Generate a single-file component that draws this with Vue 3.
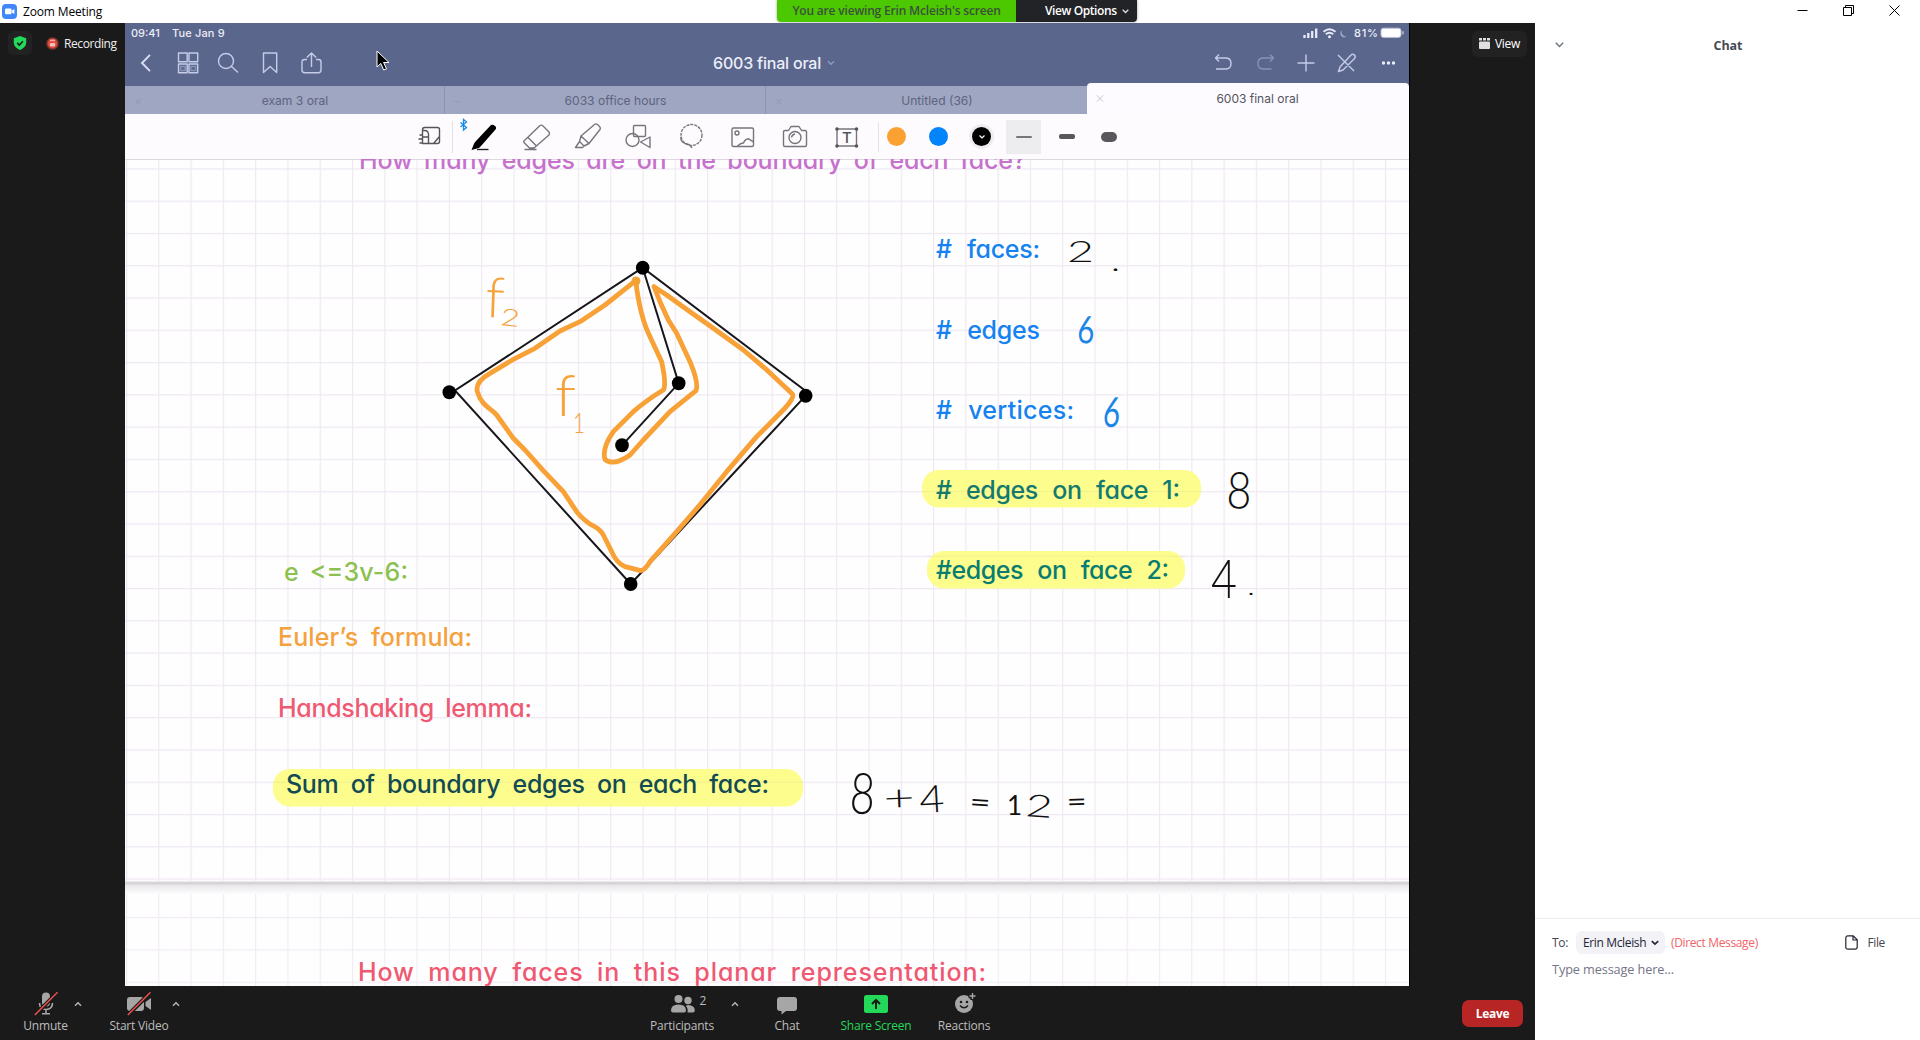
<script setup>
const notes = [
  { t: 'How many edges are on the boundary of each face?', x: 359, y: 168.5, w: 667, c: '#c672cd', s: 5 },
  { t: '# faces:', x: 936, y: 258, w: 104, c: '#1482f0', s: 9 },
  { t: '# edges', x: 936, y: 339, w: 104, c: '#1482f0', s: 9 },
  { t: '# vertices:', x: 936, y: 418.5, w: 138, c: '#1482f0', s: 9 },
  { t: '# edges on face 1:', x: 936, y: 499, w: 244, c: '#14796f', s: 8 },
  { t: '#edges on face 2:', x: 936, y: 579, w: 233, c: '#087c70', s: 8 },
  { t: 'e <=3v-6:', x: 284, y: 580.5, w: 124, c: '#8cc152', s: 4 },
  { t: 'Euler’s formula:', x: 278, y: 646, w: 194, c: '#f4a23e', s: 6 },
  { t: 'Handshaking lemma:', x: 278, y: 717, w: 254, c: '#ef5a73', s: 5 },
  { t: 'Sum of boundary edges on each face:', x: 286, y: 793, w: 483, c: '#134b52', s: 6 },
  { t: 'How many faces in this planar representation:', x: 358, y: 980.5, w: 628, c: '#f05872', s: 6 },
]

const highlights = [
  { x: 922, y: 470, w: 279 },
  { x: 927, y: 551, w: 258 },
  { x: 273, y: 769, w: 530 },
]

const black = '#111'
const blue = '#1c86e8'
const orange = '#f7a23b'
const ink = [
  { t: '2', x: 1067, y: 262, s: 30, w: 27, c: black, r: 0, k: 300 },
  { t: '.', x: 1112, y: 271, s: 22, w: 7, c: black, r: 0, k: 400 },
  { t: '6', x: 1077, y: 343, s: 38, w: 17, c: blue, r: 2, k: 400 },
  { t: '6', x: 1102, y: 426, s: 42, w: 17, c: blue, r: 6, k: 400 },
  { t: '8', x: 1226, y: 508, s: 51, w: 25, c: black, r: 2, k: 300 },
  { t: '4', x: 1211, y: 598, s: 54, w: 26, c: black, r: 0, k: 300 },
  { t: '.', x: 1248, y: 595, s: 18, w: 6, c: black, r: 0, k: 400 },
  { t: '8', x: 849, y: 813, s: 57, w: 25, c: black, r: 3, k: 300 },
  { t: '+', x: 884, y: 811, s: 36, w: 31, c: black, r: -2, k: 300 },
  { t: '4', x: 920, y: 813, s: 38, w: 25, c: black, r: -3, k: 300 },
  { t: '=', x: 969, y: 811, s: 27, w: 21, c: black, r: 4, k: 400 },
  { t: '1', x: 1007, y: 815, s: 27, w: 15, c: black, r: 0, k: 400 },
  { t: '2', x: 1025, y: 816, s: 31, w: 27, c: black, r: 4, k: 300 },
  { t: '=', x: 1067, y: 811, s: 26, w: 20, c: black, r: -2, k: 400 },
  { t: 'f', x: 485, y: 317, s: 56, w: 19, c: orange, r: 2, k: 300 },
  { t: '2', x: 500, y: 325, s: 24, w: 19, c: orange, r: 6, k: 300 },
  { t: 'f', x: 555, y: 416, s: 58, w: 21, c: orange, r: 0, k: 300 },
  { t: '1', x: 573, y: 433, s: 27, w: 12, c: orange, r: 0, k: 300 },
]

const vertices = [
  [642.7, 267.7], [449.3, 392.3], [678.7, 383.3], [622, 445.3], [805.7, 395.7], [630.7, 584],
]
</script>

<template>
  <div class="window">
    <header class="titlebar">
      <svg class="app" width="15" height="15" viewBox="0 0 15 15">
        <rect width="15" height="15" rx="4" fill="#4087fc" />
        <rect x="3" y="4.6" width="6.6" height="5.6" rx="1.3" fill="#fff" />
        <path d="M10 6.4l2.4-1.5v5L10 8.4z" fill="#fff" />
      </svg>
      <span class="app-name">Zoom Meeting</span>
      <div class="banner">
        <span class="viewing">You are viewing Erin Mcleish's screen</span>
        <span class="options">View Options
          <svg width="7" height="5" viewBox="0 0 7 5"><path d="M.7.8l2.8 2.7L6.3.8" fill="none" stroke="#ddd" stroke-width="1.3" /></svg>
        </span>
      </div>
      <div class="winbtns">
        <svg width="11" height="11" viewBox="0 0 11 11"><path d="M.5 5.5h10" stroke="#000" /></svg>
        <svg width="11" height="11" viewBox="0 0 11 11"><path d="M2.5 2.5v-2h8v8h-2M.5 2.5h8v8h-8z" fill="none" stroke="#000" /></svg>
        <svg width="11" height="11" viewBox="0 0 11 11"><path d="M.5.5l10 10m0-10l-10 10" stroke="#000" /></svg>
      </div>
    </header>

    <div class="body">
      <section class="meeting">
        <div class="stage">
          <aside class="left">
            <span class="shield">
              <svg width="14" height="14" viewBox="0 0 14 14"><path d="M7 0l6.2 2.2v4.6C13.2 10.2 10 12.8 7 14 4 12.8.8 10.2.8 6.8V2.2z" fill="#23d959" /><path d="M4.2 6.9l2.1 2.1 3.6-3.7" fill="none" stroke="#1a1a1a" stroke-width="1.6" /></svg>
            </span>
            <svg class="rec" width="13" height="13" viewBox="0 0 13 13"><circle cx="6.5" cy="6.5" r="6.3" fill="#7e3530" /><circle cx="6.5" cy="6.5" r="4.8" fill="#e0493c" /><rect x="4" y="2.6" width="5" height="1.6" fill="#efaaa2" /><rect x="3.8" y="6" width="5.4" height="3.6" rx="1" fill="#f3c0b9" /></svg>
            <span class="rec-label">Recording</span>
          </aside>

          <div class="share">
            <div class="nav">
              <div class="status">
                <span class="time">09:41</span>
                <span class="date">Tue Jan 9</span>
                <svg class="signal" width="101" height="12" viewBox="0 0 101 12">
                  <path d="M1.5 11V8M5.3 11V6M9.2 11V4M13.2 11V1.5" stroke="#e8ebfb" stroke-width="2.3" />
                  <path d="M20.5 4.8q6-5 12 0M22.8 7.2q3.7-3 7.4 0" fill="none" stroke="#e8ebfb" stroke-width="1.8" /><circle cx="26.5" cy="9.7" r="1.5" fill="#e8ebfb" />
                  <path d="M38.5 3q-.4 6 5 6.8-4 2-6-1.8-1-2.8 1-5" fill="#9fa8cb" />
                  <text x="51" y="10" class="pct" textLength="24">81%</text>
                  <rect x="78" y="1.2" width="20" height="9.2" rx="2.4" fill="#fff" stroke="#b8bfd9" /><path d="M100 4.3v3" stroke="#b8bfd9" stroke-width="1.5" />
                </svg>
              </div>
              <div class="actions">
                <svg width="44" height="26" viewBox="0 0 44 26"><path d="M25 4.8L17 13l8 8.2" fill="none" stroke="#d9def5" stroke-width="1.9" /></svg>
                <svg width="38" height="26" viewBox="0 0 38 26" class="line"><path d="M9.5 3h8.7v8.7H9.5zM20 3h8.7v8.7H20zM9.5 14h8.7v8.7H9.5zM20 14h8.7v8.7H20z" /><path d="M11.5 16.5h4.7v4h-4.7zM22 16.5h4.7v4H22z" stroke="#8792b7" /></svg>
                <svg width="42" height="26" viewBox="0 0 42 26" class="line"><circle cx="19" cy="11" r="7.5" /><path d="M24.5 16.5l6.5 6" /></svg>
                <svg width="42" height="26" viewBox="0 0 42 26" class="line"><path d="M14.5 3h13.2v19.5l-6.6-6-6.6 6z" /></svg>
                <svg width="40" height="26" viewBox="0 0 40 26" class="line"><path d="M16 9.5h-2.5q-2.5 0-2.5 2.5v8q0 2.7 2.7 2.7h13.6q2.7 0 2.7-2.7v-8q0-2.5-2.5-2.5H25M20.5 17V3m-4.7 4.5L20.5 3l4.7 4.5" /></svg>
                <span class="gap"></span>
                <span class="doc-title">6003 final oral</span>
                <svg class="tchev" width="8" height="6" viewBox="0 0 8 6"><path d="M1 1.3l3 3 3-3" fill="none" stroke="#909abf" stroke-width="1.4" /></svg>
                <span class="gap"></span>
                <svg width="42" height="26" viewBox="0 0 42 26" class="line"><path d="M17 4.5L13.5 8l3.5 3.6M14 8h10.5q4.5.5 4.5 5.4T24.5 19H14" /></svg>
                <svg width="42" height="26" viewBox="0 0 42 26" class="line dim"><path d="M26 4.5L29.5 8 26 11.6M29 8H18.5q-4.5.5-4.5 5.4t4.5 5.6h9" /></svg>
                <svg width="40" height="26" viewBox="0 0 40 26" class="line"><path d="M11.5 13h17M20 4.500v17" /></svg>
                <svg width="41" height="26" viewBox="0 0 41 26" class="line"><path d="M12 5l16 16M12.5 21.5l1.5-4.5L25 5q2-1.5 3.5 0t0 3.5L17 20z" /></svg>
                <svg width="42" height="26" viewBox="0 0 42 26" fill="#e8ebfb"><circle cx="16.5" cy="13" r="1.7" /><circle cx="21.5" cy="13" r="1.7" /><circle cx="26.5" cy="13" r="1.7" /></svg>
              </div>
              <svg class="cursor" width="14" height="22" viewBox="0 0 14 22"><path d="M1 1v16l3.8-3.6 2.9 6.6 2.8-1.2-2.9-6.3H13z" fill="#000" stroke="#fff" /></svg>
            </div>

            <div class="tabs">
              <div class="tab"><i>×</i><span>exam 3 oral</span></div>
              <div class="tab"><i>–</i><span>6033 office hours</span></div>
              <div class="tab"><i>×</i><span>Untitled (36)</span></div>
              <div class="tab active"><svg width="8" height="9" viewBox="0 0 10 10"><path d="M1 1l8 8m0-8L1 9" stroke="#c5c3cc" stroke-width="1.2" /></svg><span>6003 final oral</span></div>
            </div>

            <div class="tools">
              <svg width="44" height="40" viewBox="408 118 44 40" class="tool"><path d="M422.5 131q0-2.500 2-2.500h13q2 0 2 2v12q0 2-2 2H422.500M422.500 131.500h2q4 0 4 4v9h-6zM422.500 138h6M419.500 136h3M418.500 140h4M419.500 144h3M433.500 144.500l6-7" stroke="#555" /></svg>
              <svg width="64" height="40" viewBox="452 118 64 40"><path d="M452.5 122v32" stroke="#e4e0e8" /><path d="M460.500 123.500l6 5-3 2.500v-10.500l3 2.500-6 5" fill="none" stroke="#168be5" stroke-width="1.3" /><path d="M491 126q2-1 4 1 2 1.500.5 3.500L481 147q-1.500 2-4 2.500l-5.500 1.500 2-5q.5-2 2-3.500z" fill="#000" /><path d="M477 150.500h11.500" stroke="#222" stroke-width="1.4" /></svg>
              <svg width="44" height="40" viewBox="515 118 44 40" class="tool"><path d="M525 141l15-14.500q1.500-1 3 .5l6 6q1 1.500 0 3L534 149h-4.500l-5.500-5.500q-1-1 1-2.500zM528 138.500l8.500 8.500M524.500 150.500h12" /></svg>
              <svg width="54" height="40" viewBox="561 118 54 40" class="tool"><path d="M581 137l13.500-11.500q1.500-1.200 3 0l2 2q1.500 1.500.5 3L589 144.500zM581 137l-1.500 5.500 4.500 4.500 5-2.500M579.500 142.500l-4 6h7l1.500-1.500" /></svg>
              <svg width="48" height="40" viewBox="614 118 48 40" class="tool"><rect x="633.5" y="126.500" width="12" height="11" rx="1" /><circle cx="632.5" cy="141" r="6.5" /><path d="M640.5 143l9.5-5v10.500z" /></svg>
              <svg width="58" height="40" viewBox="662 118 58 40" class="tool"><circle cx="691.5" cy="136" r="10.5" stroke-dasharray="3 1" /><path d="M681 138q-1 5 4.500 6.500 5 1 6.500 4.500" /></svg>
              <svg width="46" height="40" viewBox="720 118 46 40" class="tool"><rect x="732" y="129" width="21.5" height="18.500" rx="1.500" /><circle cx="737" cy="134" r="2" /><path d="M737.5 147q3-3 6-3 1.500-4 5-4.200l5 3" /></svg>
              <svg width="58" height="40" viewBox="766 118 58 40" class="tool"><path d="M785 131.500h3.500l2.500-4h8l2.500 4h3.500q1.500 0 1.500 1.500v13q0 1.500-1.500 1.500h-20q-1.500 0-1.500-1.500v-13q0-1.500 1.500-1.500z" /><circle cx="795" cy="138.500" r="6" /><path d="M791.5 138.500q.5-3 3.500-3.500" /></svg>
              <svg width="54" height="40" viewBox="824 118 54 40" class="tool"><rect x="837" y="130" width="19.5" height="17" /><g fill="#555" stroke="none"><circle cx="837" cy="130" r="1.800" /><circle cx="856.5" cy="130" r="1.800" /><circle cx="837" cy="147" r="1.800" /><circle cx="856.5" cy="147" r="1.800" /></g><text x="842" y="144" class="tee">T</text></svg>
              <span class="divider"></span>
              <span class="dot o"></span>
              <span class="dot b"></span>
              <span class="dot k"><svg width="8" height="6" viewBox="0 0 8 6"><path d="M1.5 1.500L4 4l2.500-2.500" fill="none" stroke="#fff" stroke-width="1.2" /></svg></span>
              <span class="pen sel"><b></b></span>
              <span class="pen mid"><b></b></span>
              <span class="pen big"><b></b></span>
            </div>

            <svg class="page" width="1284" height="827" viewBox="125 159 1284 827">
              <defs>
                <pattern id="grid" x="126" y="168.3" width="32.28" height="32.28" patternUnits="userSpaceOnUse"><path d="M0 .5h32.28M.5 0v32.28" stroke="#efe8f2" stroke-width="1.3" fill="none" /></pattern>
                <pattern id="grid2" x="126" y="917" width="32.28" height="32.28" patternUnits="userSpaceOnUse"><path d="M0 .5h32.28M.5 0v32.28" stroke="#f1ebf4" stroke-width="1.3" fill="none" /></pattern>
                <linearGradient id="edge" x1="0" y1="0" x2="0" y2="1"><stop offset="0" stop-color="#f4f1f5" /><stop offset=".16" stop-color="#cfcbd0" /><stop offset=".32" stop-color="#e9e6ea" /><stop offset="1" stop-color="#fdfcfd" /></linearGradient>
              </defs>
              <rect x="125" y="159" width="1284" height="827" fill="#fefefe" />
              <rect x="125" y="159" width="1284" height="723" fill="url(#grid)" />
              <rect x="125" y="894" width="1284" height="92" fill="url(#grid2)" />
              <rect x="125" y="881" width="1284" height="13" fill="url(#edge)" />
              <path d="M125 159.500h1284" stroke="#dcd9df" />
              <rect v-for="h in highlights" :key="h.y" :x="h.x" :y="h.y" :width="h.w" height="37.500" rx="17" fill="#fdfd8e" />
              <g opacity=".08" stroke="#805090"><path d="M922 491.600h279M927 556.200h258M273 782.200h530" /></g>
              <text v-for="n in notes" :key="n.t" class="note" :x="n.x" :y="n.y" :fill="n.c" :word-spacing="n.s" :textLength="n.w" lengthAdjust="spacing">{{ n.t }}</text>

              <path d="M642.7 267.700L455 390.500L630.700 584L805.700 395.700V391L642.700 267.700L678.700 383.300L622 445.300" fill="none" stroke="#16161c" stroke-width="2" />
              <path transform="translate(400 230) scale(.33333)" d="M707 152L615 225L540 275L480 303L405 355L340 388L270 430Q225 455 232 485C245 530 275 535 290 555L340 625L375 660L430 722L490 785L530 845C575 900 590 880 610 915L635 965Q650 1000 675 1010L722 1022Q735 1020 750 995L830 905L895 830L980 725L1070 620L1140 550Q1190 500 1175 490L1095 415L1030 360L940 295L870 245L800 195L762 170L780 215L805 270L830 310L870 395Q897 460 888 482L810 545L730 630L690 675Q640 710 615 688Q605 655 640 605L700 545Q740 510 790 480Q800 465 785 395L750 320Q720 260 707 152" fill="none" stroke="#f7a137" stroke-width="14.500" stroke-linejoin="round" stroke-linecap="round" />
              <circle cx="636" cy="281" r="4.500" fill="#f0a334" />
              <ellipse v-for="v in vertices" :key="v[0]" :cx="v[0]" :cy="v[1]" rx="6.800" ry="7" fill="#000" />
              <text v-for="(g, i) in ink" :key="i" class="ink" :x="g.x" :y="g.y" :fill="g.c" :font-size="g.s" :font-weight="g.k" :textLength="g.w" lengthAdjust="spacingAndGlyphs" :transform="`rotate(${g.r} ${g.x} ${g.y})`">{{ g.t }}</text>
            </svg>
          </div>

          <aside class="right">
            <span class="view">
              <svg width="11" height="11" viewBox="0 0 11 11" fill="#e0e0e0"><rect width="3" height="2.500" /><rect x="4" width="3" height="2.500" /><rect x="8" width="3" height="2.500" /><rect y="3.500" width="11" height="7.500" rx="1" /></svg>
              View
            </span>
          </aside>
        </div>

        <footer class="bar">
          <div class="item mute">
            <svg width="24" height="24" viewBox="0 0 24 24"><rect x="8" y=".5" width="8" height="14" rx="4" fill="#a6a6a6" /><path d="M5.5 11q0 6.500 6.500 6.500t6.500-6.500M12 17.500v4M8 21.800h8" fill="none" stroke="#a6a6a6" stroke-width="1.6" /><path d="M1 23L23.500.5" stroke="#1a1a1a" stroke-width="4" /><path d="M.8 23L23.500.3" stroke="#f0524f" stroke-width="1.5" /></svg>
            <span>Unmute</span>
          </div>
          <svg class="chev c1" width="8" height="6" viewBox="0 0 8 6"><path d="M1 4.700l3-3 3 3" /></svg>
          <div class="item video">
            <svg width="25" height="24" viewBox="0 0 25 24"><rect x="0" y="5" width="17" height="14" rx="3" fill="#a6a6a6" /><path d="M18.5 10L24 6v12l-5.500-4z" fill="#a6a6a6" /><path d="M1 23L23.500.5" stroke="#1a1a1a" stroke-width="4" /><path d="M.8 23L23.500.3" stroke="#f0524f" stroke-width="1.5" /></svg>
            <span>Start Video</span>
          </div>
          <svg class="chev c2" width="8" height="6" viewBox="0 0 8 6"><path d="M1 4.700l3-3 3 3" /></svg>
          <div class="item people">
            <svg width="38" height="24" viewBox="0 0 38 24" fill="#a6a6a6"><circle cx="8.5" cy="7" r="4" /><circle cx="18" cy="8.500" r="3.700" /><path d="M1 18.500q0-6 7.500-6t7.500 6q0 2-2 2H3q-2 0-2-2zM17.500 20.500q.8-4-1.700-6.700 2.500-1.200 5-.3 4 1 4 5 0 2-2 2z" /><text x="29.5" y="13" class="cnt">2</text></svg>
            <span>Participants</span>
          </div>
          <svg class="chev c3" width="8" height="6" viewBox="0 0 8 6"><path d="M1 4.700l3-3 3 3" /></svg>
          <div class="item chat-b">
            <svg width="22" height="24" viewBox="0 0 22 24"><path d="M4 5h14q3 0 3 3v8q0 3-3 3h-8l-4.500 3.500V19H4q-3 0-3-3V8q0-3 3-3z" fill="#a6a6a6" /></svg>
            <span>Chat</span>
          </div>
          <div class="item green">
            <svg width="24" height="24" viewBox="0 0 24 24"><rect y="3" width="24" height="18" rx="2.500" fill="#23d959" /><path d="M12 17V8.500M8 12l4-4 4 4" fill="none" stroke="#1a1a1a" stroke-width="2" /></svg>
            <span>Share Screen</span>
          </div>
          <div class="item react">
            <svg width="24" height="24" viewBox="0 0 24 24"><circle cx="12" cy="12" r="9" fill="#a6a6a6" /><path d="M20.500 0v8M16.500 4h8" stroke="#1a1a1a" stroke-width="4.500" /><circle cx="9" cy="10" r="1.300" fill="#1a1a1a" /><circle cx="15" cy="10" r="1.300" fill="#1a1a1a" /><path d="M8 13.500q4 4.500 8 0" fill="none" stroke="#1a1a1a" stroke-width="1.500" /><path d="M20.500 1v6M17.500 4h6" stroke="#a6a6a6" stroke-width="1.400" /></svg>
            <span>Reactions</span>
          </div>
          <button class="leave">Leave</button>
        </footer>
      </section>

      <section class="chat">
        <div class="chat-head">
          <svg width="9" height="6" viewBox="0 0 9 6"><path d="M.8.8l3.700 3.700L8.200.8" fill="none" stroke="#6e7680" stroke-width="1.500" /></svg>
          <h2>Chat</h2>
        </div>
        <div class="compose">
          <div class="to">
            <span class="lbl">To:</span>
            <span class="pill">Erin Mcleish <svg width="8" height="6" viewBox="0 0 8 6"><path d="M.8 1.200l3.200 3 3.200-3" fill="none" stroke="#232333" stroke-width="1.600" /></svg></span>
            <span class="dm">(Direct Message)</span>
            <svg class="file" width="13" height="15" viewBox="0 0 13 15"><path d="M3 .8h5.200l4 4V12q0 2.200-2.200 2.200H3Q.8 14.200.8 12V3Q.8.8 3 .8zM8 .8v4.200h4.200" fill="none" stroke="#232333" stroke-width="1.200" /></svg>
            <span class="lbl">File</span>
          </div>
          <div class="ph">Type message here...</div>
        </div>
      </section>
    </div>
  </div>
</template>

<style>
body { margin: 0; overflow: hidden; }
</style>

<style scoped>
.window { width: 1920px; height: 1040px; display: flex; flex-direction: column; background: #fff; font-family: "Open Sans", "Noto Sans", sans-serif; font-size: 12px; color: #000; overflow: hidden; }
svg { display: block; flex: none; }
.titlebar { position: relative; height: 23px; flex: none; display: flex; align-items: center; padding-left: 2px; box-sizing: border-box; }
.app { margin-bottom: 1px; }
.app-name { margin-left: 6px; flex: 1; letter-spacing: -.15px; }
.banner { position: absolute; left: 777px; top: 0; width: 360px; height: 22px; display: flex; border-radius: 0 0 4px 4px; overflow: hidden; font-size: 12px; font-weight: 600; line-height: 22px; box-shadow: 0 0 3px #999; }
.viewing { width: 239px; background: #4bc800; color: #3b513b; text-align: center; letter-spacing: -.18px; white-space: nowrap; }
.options { flex: 1; background: #222326; color: #fff; display: flex; align-items: center; gap: 5px; padding-left: 29px; letter-spacing: -.4px; white-space: nowrap; }
.winbtns { display: flex; gap: 35px; padding-right: 20px; margin-bottom: 3px; }
.body { flex: 1; display: flex; min-height: 0; }
.meeting { width: 1535px; background: #1a1a1a; display: flex; flex-direction: column; }
.stage { height: 963px; display: flex; }
.left { width: 125px; display: flex; align-items: center; height: 40px; color: #f0f0f0; }
.shield { width: 24px; height: 24px; margin-left: 8px; border-radius: 5px; background: #222; display: flex; align-items: center; justify-content: center; }
.rec { margin-left: 14px; }
.rec-label { margin-left: 5px; letter-spacing: -.4px; }
.right { width: 125px; display: flex; }
.view { margin: 8px 0 0 62px; width: 55px; height: 26px; border-radius: 6px; background: #222; display: flex; align-items: center; gap: 5px; padding: 0 0 2px 7px; box-sizing: border-box; color: #fff; letter-spacing: -.3px; }
.share { width: 1285px; height: 963px; display: flex; flex-direction: column; font-family: Inter, sans-serif; overflow: hidden; border-right: 1px solid #000; box-sizing: border-box; }
.nav { position: relative; height: 63px; background: #5a668b; color: #eceefb; }
.status { height: 19px; display: flex; align-items: center; padding: 0 5px 0 6px; font-size: 11px; font-weight: 500; }
.time { width: 41px; }
.date { flex: 1; letter-spacing: .15px; }
.pct { font: 500 11px Inter, sans-serif; fill: #eceefb; }
.actions { height: 41px; display: flex; align-items: center; }
.line { fill: none; stroke: #c5ccea; stroke-width: 1.4; stroke-linejoin: round; }
.dim { stroke: #8993b8; }
.gap { flex: 1; }
.gap:first-of-type { flex: 0 0 382px; }
.doc-title { font-size: 16px; font-weight: 500; width: 109px; white-space: nowrap; letter-spacing: -.2px; }
.tchev { margin-left: 5px; }
.cursor { position: absolute; left: 251px; top: 27px; }
.tabs { height: 28px; display: flex; align-items: flex-end; background: #5a668b; flex: none; }
.tab { flex: 0 0 320px; height: 28px; background: #9fa6c1; display: flex; align-items: center; box-sizing: border-box; border-right: 1px solid #8c94b3; color: #5d6480; font-size: 12.1px; }
.tab:nth-child(2) { flex-basis: 321px; }
.tab:nth-child(3) { flex-basis: 321px; border-right: 0; }
.tab i { width: 10px; margin-left: 9px; font-style: normal; color: #929bb9; }
.tab span { flex: 1; text-align: center; padding-left: 2px; }
.tab.active { flex: 1; height: 31px; margin-top: -3px; background: #fdfbff; border: 0; border-radius: 4px 4px 0 0; color: #55545e; font-size: 12px; z-index: 1; }
.tab.active svg { margin-left: 9px; }
.tools { height: 45px; flex: none; display: flex; align-items: center; padding-left: 283px; background: #fdfbfe; }
.tool { fill: none; stroke: #77757b; stroke-width: 1.4; stroke-linejoin: round; }
.tools > svg:nth-child(2) { margin-right: -1px; }
.tools > svg:nth-child(3) { margin-right: 2px; }
.tools > svg:nth-child(4) { margin-right: -1px; }
.tee { font: 500 15px Inter, sans-serif; fill: #555; stroke: none; }
.divider { width: 1px; height: 30px; background: #e6e3e8; }
.dot { width: 19px; height: 19px; border-radius: 50%; display: flex; align-items: center; justify-content: center; flex: none; }
.o { background: #fba132; margin-left: 8px; }
.b { background: #0484fb; margin-left: 23px; }
.k { background: #000; margin-left: 24px; box-shadow: 0 0 0 3px #ededf0; }
.pen { width: 35px; height: 34px; display: flex; align-items: center; justify-content: center; flex: none; }
.pen b { width: 16px; height: 2px; border-radius: 5px; background: #59565c; }
.sel { background: #ededef; margin-left: 15px; }
.sel b { background: #777; }
.mid { margin-left: 8px; }
.mid b { height: 5px; border-radius: 2px; }
.big { margin-left: 7px; }
.big b { height: 10px; }
.note { font: 500 25px Inter, sans-serif; font-feature-settings: "cv11"; white-space: pre; }
.ink { font-family: Lato, sans-serif; }
.bar { flex: 1; display: flex; align-items: flex-start; padding-top: 6px; color: #bdbdbd; }
.item { display: flex; flex-direction: column; align-items: center; white-space: nowrap; letter-spacing: -.2px; flex: none; }
.item span { line-height: 16px; margin-top: 2px; }
.mute { width: 91px; }
.chev { margin-top: 9px; fill: none; stroke: #b4b4b4; stroke-width: 1.5; }
.c1 { margin-left: -17px; }
.video { width: 80px; margin-left: 17px; }
.c2 { margin-left: -7px; }
.people { width: 80px; margin-left: 462px; }
.people svg { margin-left: 13px; }
.cnt { font: 12px "Open Sans", sans-serif; fill: #bdbdbd; }
.c3 { margin-left: 9px; }
.chat-b { width: 60px; margin-left: 18px; }
.green { width: 90px; margin-left: 14px; color: #23d959; }
.react { width: 70px; margin-left: 8px; }
.leave { margin: 8px 12px 0 auto; width: 61px; height: 27px; border: 0; border-radius: 7px; background: #b82525; color: #fff; font: 700 12px "Open Sans", sans-serif; padding: 0; letter-spacing: -.3px; }
.chat { flex: 1; display: flex; flex-direction: column; }
.chat-head { height: 44px; display: flex; align-items: center; padding-left: 20px; }
.chat-head h2 { margin: 0; flex: 1; text-align: center; padding-right: 28px; font-size: 12.5px; font-weight: 700; color: #444b53; letter-spacing: -.1px; }
.compose { margin-top: auto; height: 122px; border-top: 1px solid #ebebf2; box-sizing: border-box; padding: 12px 35px 0 17px; }
.to { display: flex; align-items: center; height: 23px; color: #45454f; letter-spacing: -.35px; white-space: nowrap; }
.pill { margin-left: 8px; height: 23px; width: 89px; box-sizing: border-box; padding-left: 7px; border-radius: 6px; background: #f2f2f7; color: #232333; display: flex; align-items: center; gap: 5px; }
.dm { margin-left: 6px; color: #f26367; }
.file { margin-left: auto; margin-right: 9px; }
.ph { margin-top: 5px; line-height: 20px; font-size: 12.7px; color: #747487; letter-spacing: -.1px; }
</style>
